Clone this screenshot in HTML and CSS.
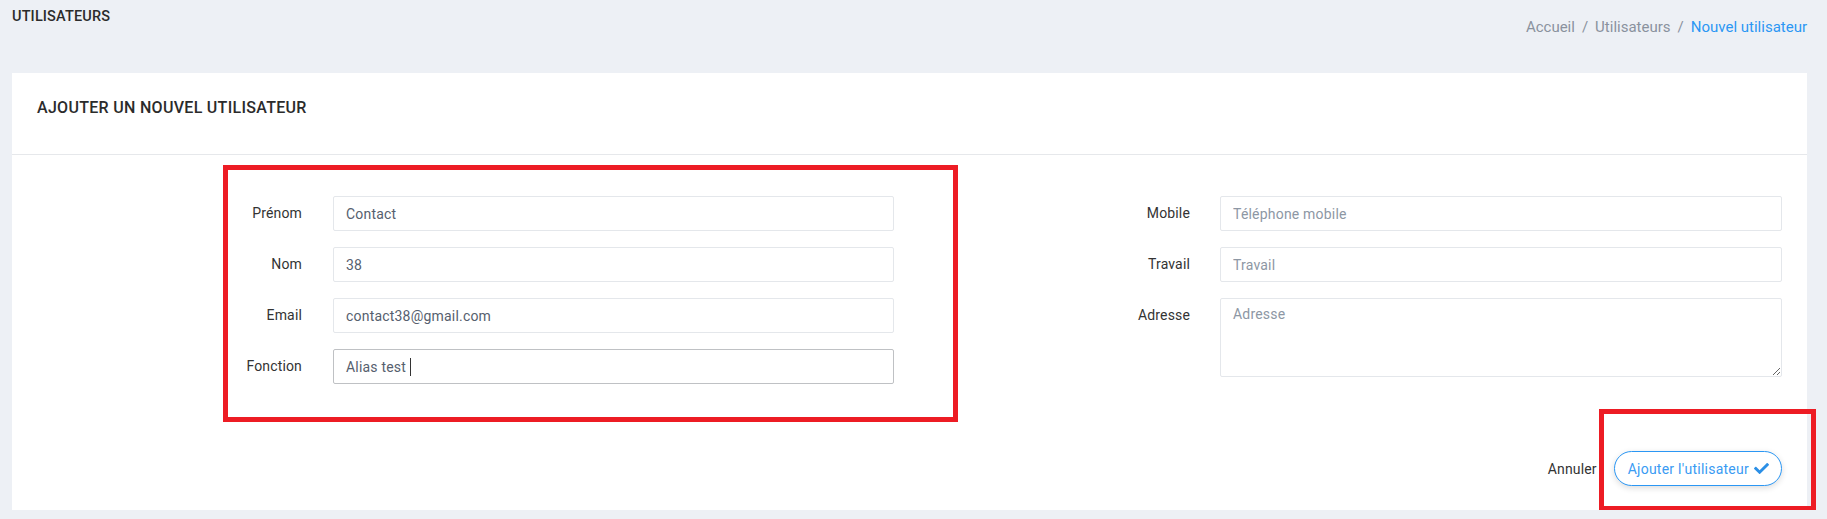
FILE: index.html
```html
<!DOCTYPE html>
<html lang="fr">
<head>
<meta charset="utf-8">
<title>Nouvel utilisateur</title>
<link rel="stylesheet" href="styles.css">
</head>
<body>
  <div class="topbar">
    <h1 class="page-title">UTILISATEURS</h1>
    <nav class="breadcrumb">
      <span class="crumb">Accueil</span>
      <span class="sep">/</span>
      <span class="crumb">Utilisateurs</span>
      <span class="sep">/</span>
      <span class="crumb active">Nouvel utilisateur</span>
    </nav>
  </div>

  <div class="card">
    <div class="card-header">
      <h2 class="card-title">AJOUTER UN NOUVEL UTILISATEUR</h2>
    </div>
    <div class="card-body">
      <div class="form-row">
        <div class="col col-left">
          <div class="field">
            <label class="label">Prénom</label>
            <input class="input" type="text" value="Contact">
          </div>
          <div class="field">
            <label class="label">Nom</label>
            <input class="input" type="text" value="38">
          </div>
          <div class="field">
            <label class="label">Email</label>
            <input class="input" type="text" value="contact38@gmail.com">
          </div>
          <div class="field">
            <label class="label">Fonction</label>
            <div class="input focused">Alias test<span class="caret"></span></div>
          </div>
        </div>
        <div class="col col-right">
          <div class="field">
            <label class="label">Mobile</label>
            <input class="input" type="text" placeholder="Téléphone mobile">
          </div>
          <div class="field">
            <label class="label">Travail</label>
            <input class="input" type="text" placeholder="Travail">
          </div>
          <div class="field">
            <label class="label">Adresse</label>
            <textarea class="input textarea" placeholder="Adresse"></textarea>
          </div>
        </div>
      </div>
      <div class="card-footer">
        <span class="cancel">Annuler</span>
        <button class="btn-submit" type="button">Ajouter l'utilisateur
          <svg class="check" viewBox="0 0 512 512" width="15" height="15" aria-hidden="true"><path d="M173.898 439.404l-166.4-166.4c-9.997-9.997-9.997-26.206 0-36.204l36.203-36.204c9.997-9.998 26.207-9.998 36.204 0L192 312.69 432.095 72.596c9.997-9.997 26.207-9.997 36.204 0l36.203 36.204c9.997 9.997 9.997 26.206 0 36.204l-294.4 294.401c-9.998 9.997-26.207 9.997-36.204-.001z"/></svg>
        </button>
      </div>
    </div>
    <div class="annot annot-btn"></div>
  </div>
</body>
</html>
```

FILE: styles.css
```css
* { box-sizing: border-box; }

html, body {
  margin: 0;
  padding: 0;
}

body {
  background: #edf0f5;
  font-family: Roboto, "Liberation Sans", Arial, sans-serif;
  color: #333;
  font-size: 14px;
  line-height: 20px;
  overflow: hidden;
}

.topbar {
  display: flex;
  justify-content: space-between;
  align-items: flex-start;
  height: 73px;
  padding: 7px 20px 0 12px;
}

.page-title {
  margin: 0;
  font-size: 14.5px;
  font-weight: 500;
  line-height: 20px;
  color: #2b2b2b;
  letter-spacing: 0.15px;
}

.breadcrumb {
  margin-top: 10px;
  font-size: 15px;
  line-height: 20px;
  color: #8a929e;
  display: flex;
}

.breadcrumb .sep {
  margin: 0 7px;
}

.breadcrumb .active {
  color: #2b97f4;
}

.card {
  position: relative;
  background: #fff;
  margin: 0 20px 0 12px;
  height: 437px;
}

.card-header {
  height: 82px;
  padding: 25px 25px 0;
  border-bottom: 1px solid #e6e8eb;
}

.card-title {
  margin: 0;
  font-size: 16px;
  font-weight: 500;
  line-height: 20px;
  color: #2b2b2b;
  letter-spacing: 0.3px;
}

.form-row {
  display: flex;
  padding: 10px 25px 0 211px;
}

.col {
  display: flex;
  flex-direction: column;
  gap: 16px;
}

.col-left {
  width: 735px;
  border: 5px solid #ed1c24;
  padding: 26px 59px 33px 0;
}

.col-left .label {
  width: 74px;
  margin-right: 31px;
}

.col-right {
  flex: 1;
  padding-top: 31px;
}

.col-right .label {
  width: 232px;
  margin-right: 30px;
}

.field {
  display: flex;
  align-items: flex-start;
}

.label {
  flex: none;
  text-align: right;
  line-height: 35px;
  font-size: 14px;
  color: #333;
  letter-spacing: 0.15px;
}

.input {
  flex: 1;
  min-width: 0;
  height: 35px;
  margin: 0;
  padding: 0 12px;
  border: 1px solid #e4e7eb;
  border-radius: 2px;
  background: #fff;
  font-family: inherit;
  font-size: 14px;
  color: #56606e;
  letter-spacing: 0.2px;
  outline: none;
}

.input::placeholder {
  color: #8d97a4;
  opacity: 1;
}

.input.focused {
  display: flex;
  align-items: center;
  border-color: #bfc1c4;
}

.caret {
  display: inline-block;
  width: 1px;
  height: 18px;
  margin-left: 4px;
  background: #333;
}

.textarea {
  height: 79px;
  padding: 5px 12px;
  line-height: 20px;
  resize: vertical;
}

.card-footer {
  display: flex;
  justify-content: flex-end;
  align-items: center;
  gap: 17px;
  margin-top: 29px;
  padding: 0 25px;
}

.cancel {
  font-size: 14px;
  color: #333;
  letter-spacing: 0.15px;
}

.btn-submit {
  display: flex;
  align-items: center;
  gap: 5px;
  height: 35px;
  padding: 0 12px 0 13px;
  border: 1px solid #2b97f4;
  border-radius: 18px;
  background: #fff;
  box-shadow: 0 2px 6px rgba(0, 0, 0, 0.14);
  font-family: inherit;
  font-size: 14px;
  letter-spacing: 0.25px;
  color: #3a9bf3;
  cursor: pointer;
}

.check {
  fill: #2b8fe6;
}

.annot {
  position: absolute;
  border: 5px solid #ed1c24;
  pointer-events: none;
}

.annot-btn {
  right: -9px;
  bottom: -1px;
  width: 217px;
  height: 102px;
}
```
